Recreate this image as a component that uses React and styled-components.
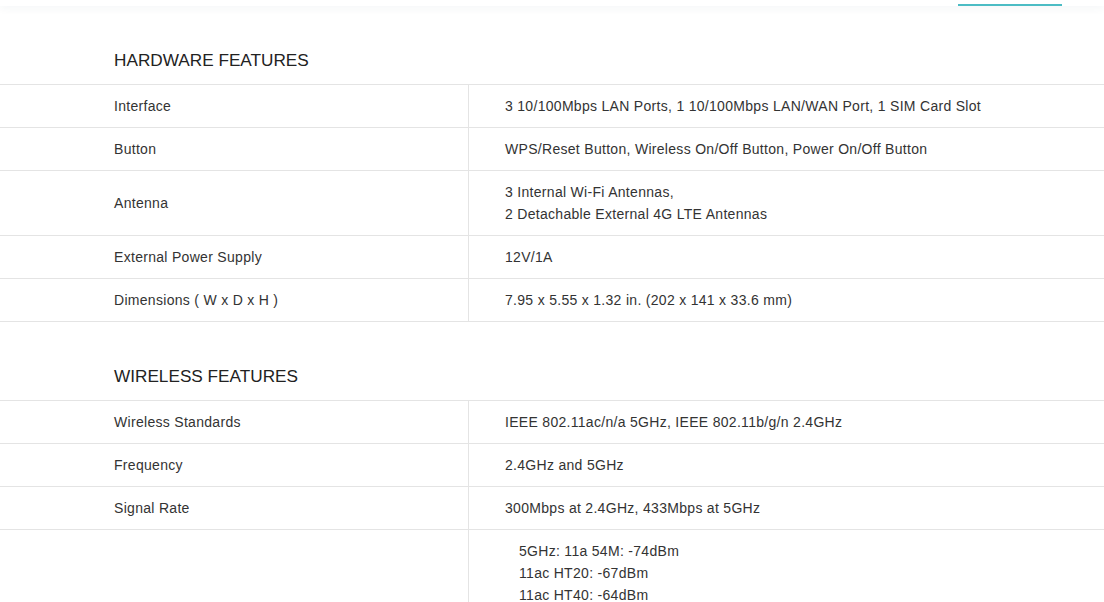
import React from "react";
import styled, { createGlobalStyle } from "styled-components";

const GlobalStyle = createGlobalStyle`
  body {
    margin: 0;
    background: #fff;
    font-family: "Liberation Sans", Arial, sans-serif;
    color: #333;
  }
`;

const TopBar = styled.div`
  height: 6px;
  background: #fff;
  box-shadow: 0 2px 8px rgba(40, 60, 90, 0.06);
  display: flex;
  justify-content: flex-end;
  align-items: flex-end;
  padding-right: 42px;
  position: relative;
  z-index: 1;
`;

const TabMark = styled.div`
  width: 104px;
  height: 2px;
  background: #4cbcc4;
`;

const Section = styled.section``;

const Heading = styled.h2`
  margin: 0;
  padding: 42px 0 12px 114px;
  font-size: 17.2px;
  line-height: 24px;
  font-weight: 400;
  color: #222;
`;

const Row = styled.div`
  display: grid;
  grid-template-columns: 469px 1fr;
  border-top: 1px solid #e4e4e4;

  &:last-child {
    border-bottom: 1px solid #e4e4e4;
  }
`;

const Cell = styled.div`
  padding: 10px 0 10px ${(props) => (props.$label ? "114px" : "36px")};
  font-size: 14px;
  line-height: 22px;
  letter-spacing: 0.3px;
  color: #333;
  border-right: ${(props) => (props.$label ? "1px solid #e4e4e4" : "none")};
  display: flex;
  flex-direction: column;
  justify-content: center;
`;

const List = styled.ul`
  margin: 0;
  padding: 0 0 0 14px;
  list-style: none;
`;

const sections = [
  {
    title: "HARDWARE FEATURES",
    rows: [
      ["Interface", ["3 10/100Mbps LAN Ports, 1 10/100Mbps LAN/WAN Port, 1 SIM Card Slot"]],
      ["Button", ["WPS/Reset Button, Wireless On/Off Button, Power On/Off Button"]],
      ["Antenna", ["3 Internal Wi-Fi Antennas,", "2 Detachable External 4G LTE Antennas"]],
      ["External Power Supply", ["12V/1A"]],
      ["Dimensions ( W x D x H )", ["7.95 x 5.55 x 1.32 in. (202 x 141 x 33.6 mm)"]],
    ],
  },
  {
    title: "WIRELESS FEATURES",
    rows: [
      ["Wireless Standards", ["IEEE 802.11ac/n/a 5GHz, IEEE 802.11b/g/n 2.4GHz"]],
      ["Frequency", ["2.4GHz and 5GHz"]],
      ["Signal Rate", ["300Mbps at 2.4GHz, 433Mbps at 5GHz"]],
      ["", null, ["5GHz: 11a 54M: -74dBm", "11ac HT20: -67dBm", "11ac HT40: -64dBm"]],
    ],
  },
];

const App = () => {
  return (
    <>
      <GlobalStyle />
      <TopBar>
        <TabMark />
      </TopBar>
      {sections.map((section) => (
        <Section key={section.title}>
          <Heading>{section.title}</Heading>
          {section.rows.map(([label, lines, list], i) => (
            <Row key={i}>
              <Cell $label>{label}</Cell>
              <Cell>
                {lines && lines.map((line, j) => <div key={j}>{line}</div>)}
                {list && (
                  <List>
                    {list.map((line, j) => (
                      <li key={j}>{line}</li>
                    ))}
                  </List>
                )}
              </Cell>
            </Row>
          ))}
        </Section>
      ))}
    </>
  );
};

export default App;
